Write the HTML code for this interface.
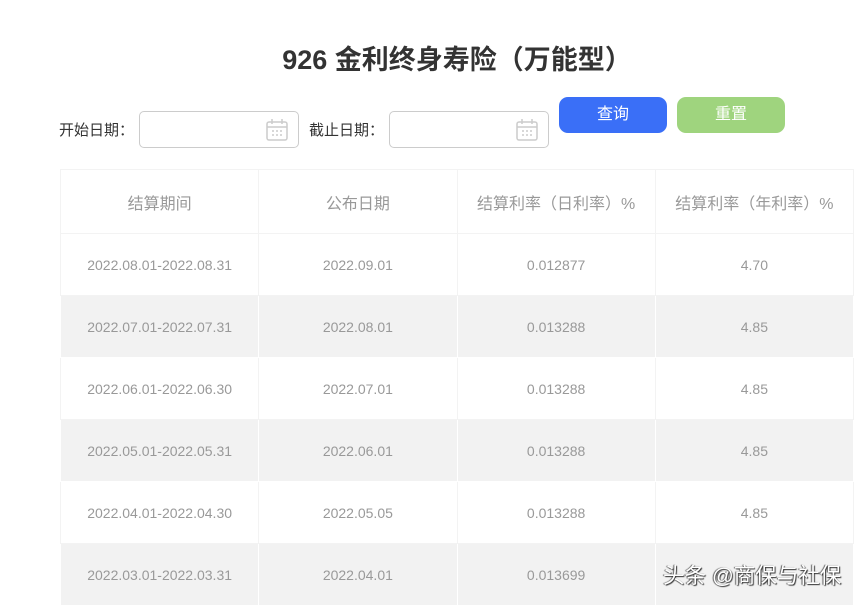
<!DOCTYPE html>
<html><head><meta charset="utf-8"><style>
*{margin:0;padding:0;box-sizing:border-box}
body{width:860px;height:601px;overflow:hidden;background:#fff;font-family:"Liberation Sans","Noto Sans CJK SC",sans-serif;position:relative}
.title{position:absolute;top:38px;left:0;width:914px;text-align:center;font-size:27px;font-weight:bold;color:#333}
.lbl{position:absolute;top:119px;font-size:15px;color:#333}
.inp{position:absolute;top:111px;width:160px;height:37px;border:1px solid #ccc;border-radius:5px}
.inp svg{position:absolute;right:9px;top:6px}
.btn{position:absolute;top:97px;width:108px;height:36px;border-radius:9px;color:#fff;font-size:16px;text-align:center;line-height:36px}
table{position:absolute;left:60px;top:169px;border-collapse:collapse;width:794px;table-layout:fixed}
td{height:62px;padding:0;text-align:center;color:#999;font-size:14px;border:1px solid #f3f3f3}
tr.h td{height:64px;font-size:16px}
tr.g td{background:#f2f2f2;border-color:#fff}
.wm{position:absolute;left:663px;top:559px;font-size:21.5px;color:#fff;text-shadow:1px 1px 1px #333,-1px 0 1px #555;white-space:nowrap}
</style></head><body>
<div class="title">926 金利终身寿险（万能型）</div>
<div class="lbl" style="left:59px">开始日期：</div>
<div class="inp" style="left:139px"><svg width="24" height="24" viewBox="0 0 24 24" fill="none" stroke="#ccc" stroke-width="1.5"><rect x="2" y="4" width="20" height="18" rx="2"/><path d="M2 9h20M7 1v5M17 1v5M7 13h2M11 13h2M15 13h2M7 17h2M11 17h2M15 17h2"/></svg></div>
<div class="lbl" style="left:309px">截止日期：</div>
<div class="inp" style="left:389px"><svg width="24" height="24" viewBox="0 0 24 24" fill="none" stroke="#ccc" stroke-width="1.5"><rect x="2" y="4" width="20" height="18" rx="2"/><path d="M2 9h20M7 1v5M17 1v5M7 13h2M11 13h2M15 13h2M7 17h2M11 17h2M15 17h2"/></svg></div>
<div class="btn" style="left:559px;background:#3a6ff7">查询</div>
<div class="btn" style="left:677px;background:#9fd47e">重置</div>
<table>
<tr class="h"><td style="height:64px">结算期间</td><td>公布日期</td><td>结算利率（日利率）%</td><td>结算利率（年利率）%</td></tr>
<tr><td>2022.08.01-2022.08.31</td><td>2022.09.01</td><td>0.012877</td><td>4.70</td></tr>
<tr class="g"><td>2022.07.01-2022.07.31</td><td>2022.08.01</td><td>0.013288</td><td>4.85</td></tr>
<tr><td>2022.06.01-2022.06.30</td><td>2022.07.01</td><td>0.013288</td><td>4.85</td></tr>
<tr class="g"><td>2022.05.01-2022.05.31</td><td>2022.06.01</td><td>0.013288</td><td>4.85</td></tr>
<tr><td>2022.04.01-2022.04.30</td><td>2022.05.05</td><td>0.013288</td><td>4.85</td></tr>
<tr class="g"><td>2022.03.01-2022.03.31</td><td>2022.04.01</td><td>0.013699</td><td></td></tr>
</table>
<div class="wm">头条 @商保与社保</div>
</body></html>
